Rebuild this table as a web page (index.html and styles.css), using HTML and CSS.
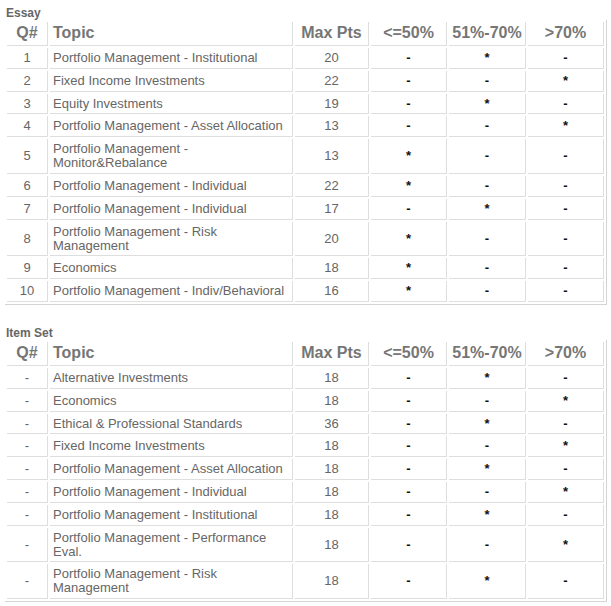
FILE: index.html
```html
<!DOCTYPE html>
<html>
<head>
<meta charset="utf-8">
<title>Scores</title>
<link rel="stylesheet" href="styles.css">
</head>
<body>
<div class="section">
  <div class="section-title">Essay</div>
  <table class="grid">
    <thead>
      <tr>
        <th class="c-q">Q#</th>
        <th class="c-topic topic">Topic</th>
        <th class="c-max">Max Pts</th>
        <th class="c-g1">&lt;=50%</th>
        <th class="c-g2">51%-70%</th>
        <th class="c-g3">&gt;70%</th>
      </tr>
    </thead>
    <tbody>
      <tr><td>1</td><td class="topic">Portfolio Management - Institutional</td><td>20</td><td class="mark">-</td><td class="mark">*</td><td class="mark">-</td></tr>
      <tr><td>2</td><td class="topic">Fixed Income Investments</td><td>22</td><td class="mark">-</td><td class="mark">-</td><td class="mark">*</td></tr>
      <tr><td>3</td><td class="topic">Equity Investments</td><td>19</td><td class="mark">-</td><td class="mark">*</td><td class="mark">-</td></tr>
      <tr><td>4</td><td class="topic">Portfolio Management - Asset Allocation</td><td>13</td><td class="mark">-</td><td class="mark">-</td><td class="mark">*</td></tr>
      <tr><td>5</td><td class="topic">Portfolio Management - Monitor&amp;Rebalance</td><td>13</td><td class="mark">*</td><td class="mark">-</td><td class="mark">-</td></tr>
      <tr><td>6</td><td class="topic">Portfolio Management - Individual</td><td>22</td><td class="mark">*</td><td class="mark">-</td><td class="mark">-</td></tr>
      <tr><td>7</td><td class="topic">Portfolio Management - Individual</td><td>17</td><td class="mark">-</td><td class="mark">*</td><td class="mark">-</td></tr>
      <tr><td>8</td><td class="topic">Portfolio Management - Risk Management</td><td>20</td><td class="mark">*</td><td class="mark">-</td><td class="mark">-</td></tr>
      <tr><td>9</td><td class="topic">Economics</td><td>18</td><td class="mark">*</td><td class="mark">-</td><td class="mark">-</td></tr>
      <tr><td>10</td><td class="topic">Portfolio Management - Indiv/Behavioral</td><td>16</td><td class="mark">*</td><td class="mark">-</td><td class="mark">-</td></tr>
    </tbody>
  </table>
</div>
<div class="section">
  <div class="section-title">Item Set</div>
  <table class="grid">
    <thead>
      <tr>
        <th class="c-q">Q#</th>
        <th class="c-topic topic">Topic</th>
        <th class="c-max">Max Pts</th>
        <th class="c-g1">&lt;=50%</th>
        <th class="c-g2">51%-70%</th>
        <th class="c-g3">&gt;70%</th>
      </tr>
    </thead>
    <tbody>
      <tr><td>-</td><td class="topic">Alternative Investments</td><td>18</td><td class="mark">-</td><td class="mark">*</td><td class="mark">-</td></tr>
      <tr><td>-</td><td class="topic">Economics</td><td>18</td><td class="mark">-</td><td class="mark">-</td><td class="mark">*</td></tr>
      <tr><td>-</td><td class="topic">Ethical &amp; Professional Standards</td><td>36</td><td class="mark">-</td><td class="mark">*</td><td class="mark">-</td></tr>
      <tr><td>-</td><td class="topic">Fixed Income Investments</td><td>18</td><td class="mark">-</td><td class="mark">-</td><td class="mark">*</td></tr>
      <tr><td>-</td><td class="topic">Portfolio Management - Asset Allocation</td><td>18</td><td class="mark">-</td><td class="mark">*</td><td class="mark">-</td></tr>
      <tr><td>-</td><td class="topic">Portfolio Management - Individual</td><td>18</td><td class="mark">-</td><td class="mark">-</td><td class="mark">*</td></tr>
      <tr><td>-</td><td class="topic">Portfolio Management - Institutional</td><td>18</td><td class="mark">-</td><td class="mark">*</td><td class="mark">-</td></tr>
      <tr><td>-</td><td class="topic">Portfolio Management - Performance Eval.</td><td>18</td><td class="mark">-</td><td class="mark">-</td><td class="mark">*</td></tr>
      <tr><td>-</td><td class="topic">Portfolio Management - Risk Management</td><td>18</td><td class="mark">-</td><td class="mark">*</td><td class="mark">-</td></tr>
    </tbody>
  </table>
</div>
</body>
</html>
```
FILE: styles.css
```css
html, body {
  background: #ffffff;
}
body {
  margin: 0;
  padding: 6px 4px 0 5px;
  font-family: "Liberation Sans", Arial, sans-serif;
  color: #666666;
}
.section + .section {
  margin-top: 21px;
}
.section-title {
  margin-left: 1px;
  font-size: 12px;
  font-weight: bold;
  line-height: 14px;
  color: #666666;
}
.grid {
  width: 602px;
  table-layout: fixed;
  border-collapse: separate;
  border-spacing: 2px;
  border-right: 1px solid #d4d4d4;
  border-bottom: 1px solid #d4d4d4;
}
.grid th,
.grid td {
  box-sizing: border-box;
  border-right: 1px solid #dedede;
  border-bottom: 1px solid #dedede;
  text-align: center;
  vertical-align: middle;
}
.grid th {
  font-size: 16px;
  font-weight: bold;
  line-height: 18px;
  padding: 2px 3px 3px;
  color: #767676;
}
.grid td {
  font-size: 13px;
  line-height: 14px;
  padding: 3px 3px 2.8px;
}
.grid .topic {
  text-align: left;
}
.grid .mark {
  color: #111111;
  font-weight: bold;
}
.c-q { width: 41px; }
.c-topic { width: 243px; }
.c-max { width: 74px; }
.c-g1 { width: 76px; }
.c-g2 { width: 77px; }
.c-g3 { width: 76px; }
```
